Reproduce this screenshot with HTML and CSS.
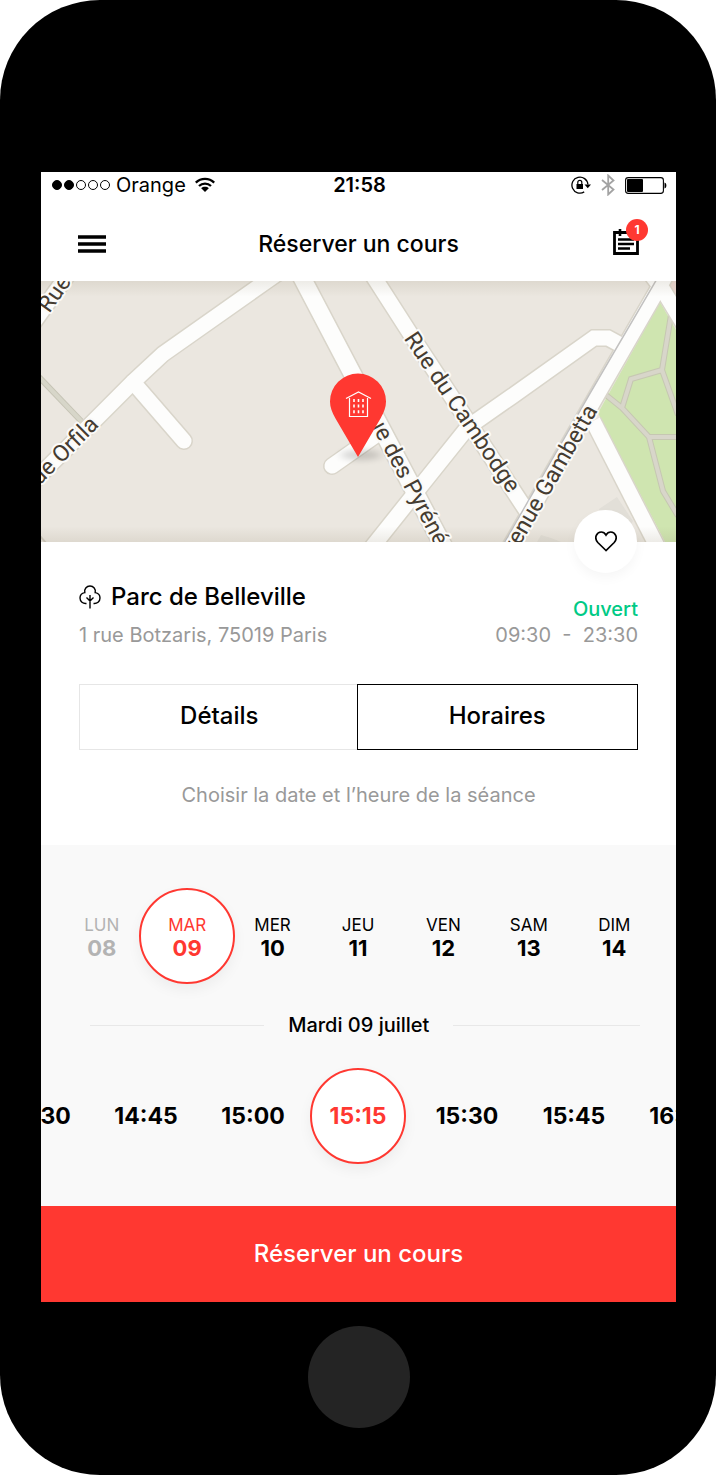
FILE: index.html
```html
<!DOCTYPE html>
<html lang="fr">
<head>
<meta charset="utf-8">
<meta name="viewport" content="width=device-width, initial-scale=1">
<title>Réserver un cours</title>
<link rel="stylesheet" href="styles.css">
</head>
<body>
<div class="phone">
  <div class="screen">
    <div class="status">
      <div class="status-left">
        <svg width="58" height="12" viewBox="0 0 58 12" aria-hidden="true">
          <g stroke="#000" stroke-width="1"><circle cx="5" cy="6" r="4.5"/><circle cx="17" cy="6" r="4.5"/></g>
          <g fill="none" stroke="#000" stroke-width="1"><circle cx="29" cy="6" r="4.5"/><circle cx="41" cy="6" r="4.5"/><circle cx="53" cy="6" r="4.5"/></g>
        </svg>
        <span class="carrier">Orange</span>
        <svg width="20" height="16" viewBox="0 0 20 16" aria-hidden="true">
          <g fill="none" stroke="#000" stroke-width="2.3"><path d="M.8 5.6C6 .6 14 .6 19.200 5.600"/><path d="M4 9C7.300 5.900 12.700 5.900 16 9"/></g>
          <path d="M6.200 11.200C8.200 9.400 11.800 9.400 13.800 11.200L10 15Z"/>
        </svg>
      </div>
      <span class="clock">21:58</span>
      <div class="status-right">
        <svg width="20" height="18" viewBox="0 0 20 18" aria-hidden="true">
          <path d="M13.200 15.900A8 8 0 1 1 16.900 8.500" fill="none" stroke="#000" stroke-width="1.300"/>
          <path d="M13.500 8.500h6.500l-3.250 3.800z"/>
          <rect x="5.500" y="8" width="6.500" height="5"/>
          <path d="M6.800 8.500V6.300a2 2 0 0 1 4 0V8.500" fill="none" stroke="#000" stroke-width="1.200"/>
        </svg>
        <svg width="14" height="22" viewBox="0 0 14 22" aria-hidden="true">
          <path d="M1 6L12.500 15.500L7.200 20.500V1.500L12.500 6.500L1 16" fill="none" stroke="#a3a3a3" stroke-width="1.800"/>
        </svg>
        <svg width="42" height="17" viewBox="0 0 42 17" aria-hidden="true">
          <rect x=".6" y=".6" width="37.800" height="15.800" rx="2.600" fill="none" stroke="#000" stroke-width="1.100"/>
          <rect x="2" y="2" width="16" height="13" rx="1"/>
          <path d="M39.500 5.500C42 6 42 11 39.500 11.500Z"/>
        </svg>
      </div>
    </div>

    <header class="header">
      <button class="icon-button" aria-label="Menu">
        <svg width="28" height="18" viewBox="0 0 28 18"><path d="M0 2H28M0 9H28M0 16H28" stroke="#000" stroke-width="3.400"/></svg>
      </button>
      <h1 class="title">Réserver un cours</h1>
      <button class="icon-button agenda" aria-label="Réservations">
        <svg width="26" height="26" viewBox="0 0 26 26">
          <path d="M1.500 3.500H24.500V24.500H1.500Z" fill="none" stroke="#000" stroke-width="2.800"/>
          <path d="M7 0V7" stroke="#000" stroke-width="2.600"/>
          <path d="M5 10.500H21M5 15H21M5 19.500H17" stroke="#000" stroke-width="2.400"/>
        </svg>
        <span class="badge">1</span>
      </button>
    </header>

    <div class="map">
      <svg class="map-art" viewBox="0 0 635 261" preserveAspectRatio="xMidYMid slice" role="img" aria-label="Plan du quartier">
        <defs>
          <linearGradient id="shade" x1="0" y1="0" x2="0" y2="1">
            <stop offset="0" stop-color="#8c8066" stop-opacity=".14"/>
            <stop offset=".06" stop-color="#8c8066" stop-opacity="0"/>
            <stop offset=".94" stop-color="#8c8066" stop-opacity="0"/>
            <stop offset="1" stop-color="#8c8066" stop-opacity=".14"/>
          </linearGradient>
          <filter id="soft" x="-50%" y="-100%" width="200%" height="300%"><feGaussianBlur stdDeviation="5 3"/></filter>
          <g id="roads" fill="none">
            <path d="M-12 48L28 -8"/>
            <path d="M-12 205L51 142L92 101L122 73L227 -1L240 -10"/>
            <path d="M92 101L143 160" stroke-linecap="round"/>
            <path d="M291 185L338 152" stroke-linecap="round"/>
            <path d="M257 -11L311 92L405 270" stroke-width="20"/>
            <path d="M329 -10L372 57L485 229"/>
            <path d="M328 270L379 206L427 146L470 116L553 57H567L580 64"/>
            <path d="M552 140L619 271"/>
            <path d="M600 -20L622 9L645 47"/>
            <path d="M628 -11L556 114L466 271"/>
          </g>
        </defs>
        <rect width="635" height="261" fill="#ebe7e0"/>
        <path d="M558 228L576 216L592 240L580 261H560Z" fill="#e2dfd8"/>
        <path d="M500 254L510 257L520 261H496Z" fill="#e2dfd8"/>
        <path d="M626 0H635V16Z" fill="#ebd8d1"/>
        <path d="M619 21L635 49V261H624L557 132Z" fill="#cfe5b0"/>
        <g fill="none">
          <path d="M630 34L621 89L637 134M621 89L590 98L581 127M560 110L581 127L608 156H637M608 156L622 210L637 235" stroke="#c6c7b2" stroke-width="6"/>
          <path d="M630 34L621 89L637 134M621 89L590 98L581 127M560 110L581 127L608 156H637M608 156L622 210L637 235" stroke="#d8d6ca" stroke-width="4"/>
          <path d="M-3 95L42 142" stroke="#c6c4b5" stroke-width="6"/>
          <path d="M-3 95L42 142" stroke="#d7d6c9" stroke-width="4"/>
          <path d="M-3 253L6 263" stroke="#cfcabf" stroke-width="2"/>
        </g>
        <use href="#roads" stroke="#d9d5ca" stroke-width="18"/>
        <path d="M257 -11L311 92L405 270" fill="none" stroke="#fdfdfc" stroke-width="17"/>
        <g fill="none" stroke="#fdfdfc" stroke-width="15">
          <path d="M-12 48L28 -8"/>
          <path d="M-12 205L51 142L92 101L122 73L227 -1L240 -10"/>
          <path d="M92 101L143 160" stroke-linecap="round"/>
          <path d="M291 185L338 152" stroke-linecap="round"/>
          <path d="M329 -10L372 57L485 229"/>
          <path d="M328 270L379 206L427 146L470 116L553 57H567L580 64"/>
          <path d="M552 140L619 271"/>
          <path d="M600 -20L622 9L645 47"/>
          <path d="M628 -11L556 114L466 271"/>
        </g>
        <path d="M620 -9L548 114L458 271" fill="none" stroke="#c2c1c0" stroke-width="1.500"/>
        <rect width="635" height="261" fill="url(#shade)"/>
        <g class="street">
          <text transform="translate(4 25) rotate(-55)" y="8" x="-4">Rue</text>
          <text transform="translate(53 139) rotate(-45)" y="8" text-anchor="end">Rue de Orfila</text>
          <text transform="translate(420 132) rotate(56)" y="6" text-anchor="middle">Rue du Cambodge</text>
          <text transform="translate(326 124) rotate(62)" y="6">Rue des Pyrénées</text>
          <text transform="translate(551 126) rotate(-60)" y="7" text-anchor="end">Avenue Gambetta</text>
        </g>
        <ellipse cx="320" cy="174" rx="20" ry="5" fill="#000" opacity=".16" filter="url(#soft)"/>
        <path d="M317 176L294.500 137.500C291 131.500 289 126 289 120.500A28 28 0 0 1 345 120.500C345 126 343 131.500 339.500 137.500Z" fill="#ff3831"/>
        <g fill="none" stroke="#fff" stroke-width="1.200">
          <path d="M308.500 117V135.500H326.500V117M305 117.500L317.500 111L330 117.500"/>
          <path d="M313 118V133M317.500 118V133M322 118V133" stroke-width="1.600" stroke-dasharray="3 2.600"/>
        </g>
      </svg>
      <button class="favorite" aria-label="Ajouter aux favoris">
        <svg width="22" height="21" viewBox="0 0 22 21"><path d="M11 19.500L2.800 11.500C-1.500 6.500 2 1 6.200 1C8.500 1 10 2.200 11 4C12 2.200 13.500 1 15.800 1C20 1 23.500 6.500 19.200 11.500Z" fill="none" stroke="#000" stroke-width="1.700"/></svg>
      </button>
    </div>

    <section class="place">
      <div class="place-row">
        <div>
          <h2 class="place-name">
            <svg width="22" height="24" viewBox="0 0 22 24" aria-hidden="true"><path d="M7.500 18.500C4 19 1 16.500 1 13C1 9.800 3 8 5.800 7.600C5 4 7.500 1 11 1S17 4 16.200 7.600C19 8 21 9.800 21 13C21 16.500 18 19 14.500 18.500M11 10V23.500M7.500 12.500L11 16L14.500 12.500" fill="none" stroke="#000" stroke-width="1.400"/></svg>
            Parc de Belleville
          </h2>
          <p class="muted">1 rue Botzaris, 75019 Paris</p>
        </div>
        <div class="hours">
          <p class="open">Ouvert</p>
          <p class="muted range">09:30 &nbsp;-&nbsp; 23:30</p>
        </div>
      </div>
      <div class="tabs">
        <button class="tab">Détails</button>
        <button class="tab active">Horaires</button>
      </div>
      <p class="muted prompt">Choisir la date et l’heure de la séance</p>
    </section>

    <section class="schedule">
      <div class="days">
        <button class="day" disabled><span>LUN</span><b>08</b></button>
        <button class="day selected" aria-pressed="true"><span>MAR</span><b>09</b></button>
        <button class="day"><span>MER</span><b>10</b></button>
        <button class="day"><span>JEU</span><b>11</b></button>
        <button class="day"><span>VEN</span><b>12</b></button>
        <button class="day"><span>SAM</span><b>13</b></button>
        <button class="day"><span>DIM</span><b>14</b></button>
      </div>
      <h3 class="date">Mardi 09 juillet</h3>
      <div class="times">
        <button class="time">14:30</button>
        <button class="time">14:45</button>
        <button class="time">15:00</button>
        <button class="time selected" aria-pressed="true">15:15</button>
        <button class="time">15:30</button>
        <button class="time">15:45</button>
        <button class="time">16:00</button>
      </div>
    </section>
    <button class="book">Réserver un cours</button>
  </div>
  <div class="home"></div>
</div>
</body>
</html>
```
FILE: styles.css
```css
* { box-sizing: border-box; }
body { margin: 0; background: #fff; color: #000; font-family: Inter, "Liberation Sans", sans-serif; }
h1, h2, h3, p { margin: 0; font-weight: 500; }
button { margin: 0; padding: 0; border: 0; background: none; color: inherit; font: inherit; cursor: pointer; }
svg { display: block; flex: none; }

.phone { padding: 172px 40px 47px 41px; border-radius: 100px; background: #000; }
.screen { overflow: hidden; background: #fff; }
.home { width: 102px; height: 102px; margin: 24px auto 0; border-radius: 50%; background: #242424; }

.status { display: grid; grid-template-columns: 1fr auto 1fr; align-items: center; height: 26px; padding: 0 9px 0 11px; font-size: 20px; }
.status-left, .status-right { display: flex; align-items: center; }
.status-left { gap: 6px; }
.carrier { margin-right: 3px; }
.clock { font-weight: 600; }
.status-right { justify-content: flex-end; gap: 10px; }

.header { display: grid; grid-template-columns: 1fr auto 1fr; align-items: center; height: 83px; padding: 8px 37px 0; }
.icon-button { justify-self: start; }
.agenda { position: relative; justify-self: end; margin-bottom: 4px; }
.title { font-size: 23px; line-height: 32px; }
.badge { position: absolute; top: -10px; right: -9px; width: 22px; height: 22px; border-radius: 50%; background: #ff3831; color: #fff; font-size: 12px; font-weight: 700; line-height: 22px; }

.map { position: relative; }
.map-art { width: 100%; height: auto; }
.street { font-family: Roboto, sans-serif; font-size: 23px; fill: #453c31; stroke: #fbfaf8; stroke-width: 4px; stroke-linejoin: round; paint-order: stroke; }
.favorite { position: absolute; right: 39px; bottom: -31px; display: grid; place-items: center; width: 63px; height: 63px; border-radius: 50%; background: #fff; box-shadow: 0 5px 12px rgba(0, 0, 0, .04); }

.place { padding: 38px 38px 37px; }
.place-row { display: flex; justify-content: space-between; align-items: flex-end; margin-bottom: 36px; }
.place-name { display: flex; align-items: center; gap: 10px; font-size: 24px; line-height: 34px; margin-bottom: 8px; }
.muted { color: #999; font-size: 20px; font-weight: 400; line-height: 26px; }
.hours { text-align: right; }
.open { color: #00ca85; font-size: 20px; line-height: 26px; }
.tabs { display: grid; grid-template-columns: 1fr 1fr; }
.tab { height: 66px; border: 1px solid #e6e6e6; border-right: 0; font-size: 24px; font-weight: 500; padding-bottom: 4px; }
.tab.active { margin-left: -2px; border: 1px solid #000; }
.prompt { margin-top: 32px; text-align: center; }

.schedule { padding-top: 43px; background: #f9f9f9; }
.days { display: grid; grid-template-columns: repeat(7, minmax(0, 1fr)); justify-items: center; padding: 0 19px 0 18px; }
.day { display: flex; flex-direction: column; align-items: center; justify-content: center; width: 96px; height: 96px; padding-top: 2px; }
.day span { font-size: 17px; line-height: 22px; }
.day b { font-size: 22px; line-height: 24px; font-weight: 700; }
.day:disabled { color: #b3b3b3; }
.date { display: flex; align-items: center; gap: 24px; margin: 24px 36px 0 49px; font-size: 20px; line-height: 34px; }
.date::before, .date::after { content: ""; flex: 14 1 0; height: 1px; background: #e8e8e8; }
.date::after { flex-grow: 15; }
.times { display: flex; justify-content: center; gap: 11px; padding: 26px 1px 42px 0; overflow: hidden; }
.time { flex: none; width: 96px; height: 96px; padding-left: 4px; font-size: 23px; font-weight: 700; }
.selected { padding-left: 0; border: 2px solid #ff3831; border-radius: 50%; background: #fff; color: #ff3831; box-shadow: 0 6px 14px rgba(0, 0, 0, .05); }
.book { display: block; width: 100%; height: 96px; padding-bottom: 2px; background: #ff3831; color: #fff; font-size: 24px; font-weight: 500; }
```
